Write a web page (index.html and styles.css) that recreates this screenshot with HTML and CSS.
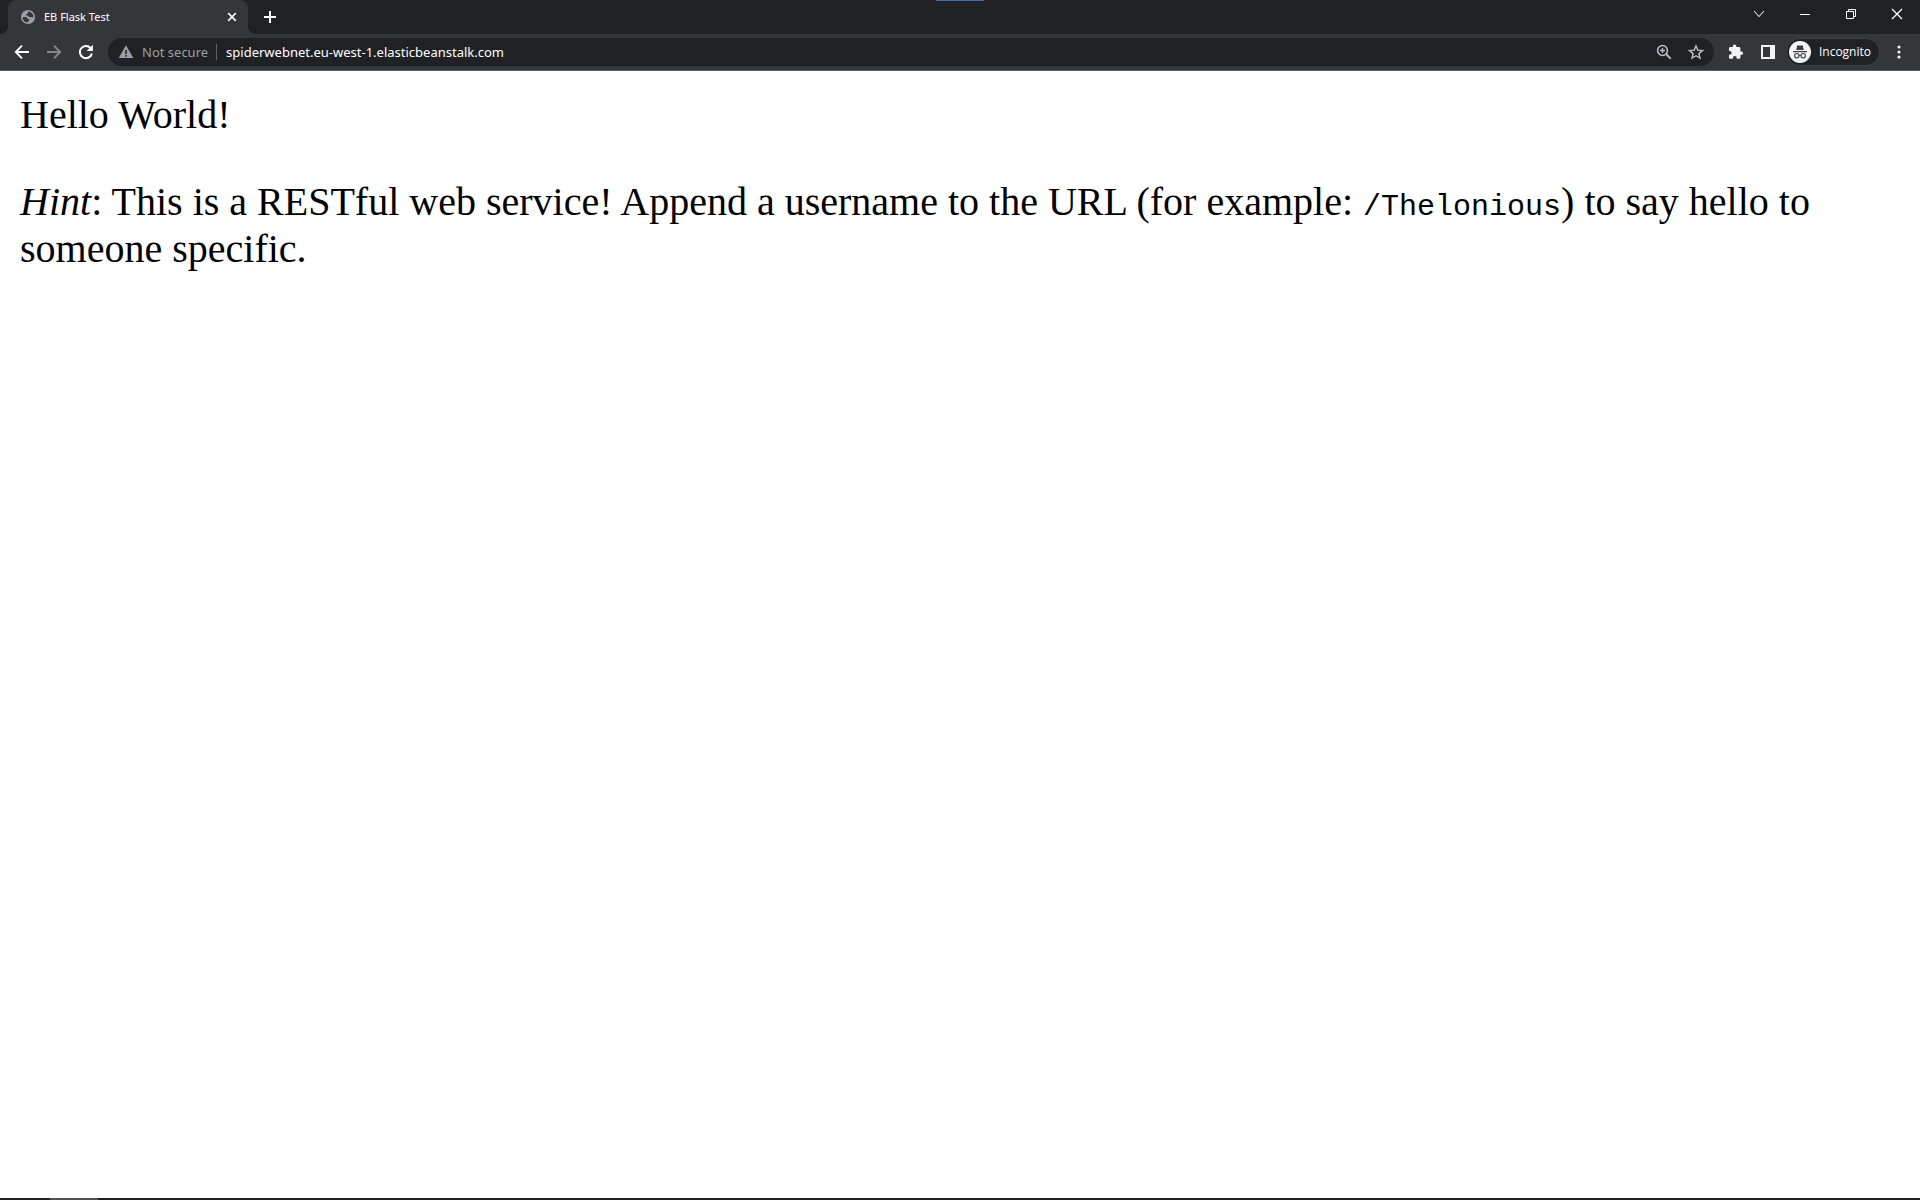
FILE: index.html
```
<!DOCTYPE html>
<html lang="en">
<head>
<meta charset="utf-8">
<title>EB Flask Test</title>
<link rel="stylesheet" href="styles.css">
</head>
<body>
<header class="browser">
  <div class="tab-strip">
    <div class="tab">
      <svg class="favicon" width="16" height="16" viewBox="0 0 16 16" aria-hidden="true"><circle cx="8" cy="8" r="7" fill="#9aa0a6"/><path d="M2.600 8.300c1.500-.2 2.600-.6 3.700 0 1.200.7 1 1.500 2.100 1.600 1.200.1 1.300 1 .6 1.700-.8.700-.6 1.600-1.600 2A5.700 5.700 0 0 1 2.600 8.300zM8.600 2.400c-1.300.7-.2 1.600-1.100 2.300-.8.600-1.500.4-1.400 1.400.1 1.200 1.900.4 2.700 1.300.8.900 1.500.9 2.300.7 1-.2 1.600.3 2.400.3A5.700 5.700 0 0 0 8.600 2.400z" fill="#35363a"/></svg>
      <span class="tab-title">EB Flask Test</span>
      <button class="tab-close" aria-label="Close tab"><svg width="16" height="16" viewBox="0 0 16 16"><path d="M4.200 4.200l7.600 7.600M11.800 4.200l-7.600 7.600" stroke="#f1f3f4" stroke-width="1.700"/></svg></button>
    </div>
    <button class="new-tab" aria-label="New tab"><svg width="16" height="16" viewBox="0 0 16 16"><path d="M8 2v12M2 8h12" stroke="#fff" stroke-width="2"/></svg></button>
    <div class="screen-handle"></div>
    <div class="window-controls">
      <button class="window-button" aria-label="Search tabs"><svg width="16" height="16" viewBox="0 0 16 16"><path d="M3 5l5 5.500L13 5" fill="none" stroke="#dadce0" stroke-width="1.100"/></svg></button>
      <button class="window-button" aria-label="Minimize"><svg width="16" height="16" viewBox="0 0 16 16"><path d="M3 8.500h10" stroke="#fff"/></svg></button>
      <button class="window-button" aria-label="Restore"><svg width="16" height="16" viewBox="0 0 16 16"><path d="M3.500 5.500h7v7h-7zM5.500 5.500v-2h7v7h-2" fill="none" stroke="#fff"/></svg></button>
      <button class="window-button" aria-label="Close"><svg width="16" height="16" viewBox="0 0 16 16"><path d="M3 3l10 10M13 3L3 13" stroke="#fff" stroke-width="1.300"/></svg></button>
    </div>
  </div>
  <div class="toolbar">
    <div class="nav">
      <button class="tool" aria-label="Back"><svg width="16" height="16" viewBox="0 0 16 16"><path d="M15 8H2.500M8 1.700L1.800 8 8 14.300" fill="none" stroke="#fff" stroke-width="1.900"/></svg></button>
      <button class="tool" aria-label="Forward"><svg width="16" height="16" viewBox="0 0 16 16"><path d="M1 8h12.500M8 1.700L14.200 8 8 14.300" fill="none" stroke="#85878b" stroke-width="1.900"/></svg></button>
      <button class="tool" aria-label="Reload"><svg width="16" height="16" viewBox="0 0 16 16"><path d="M13.900 9.500A6.100 6.100 0 1 1 12.300 3.700" fill="none" stroke="#fff" stroke-width="2"/><path d="M14.900 .8v6.300H8.600z" fill="#fff"/></svg></button>
    </div>
    <div class="omnibox">
      <svg width="16" height="16" viewBox="0 0 16 16" aria-hidden="true"><path d="M8 1.200L15.300 14H.7z" fill="#9aa0a6"/><path d="M8 6v4M8 11v1.800" stroke="#202124" stroke-width="1.600"/></svg>
      <span class="security">Not secure</span>
      <input class="address" type="text" aria-label="Address" value="spiderwebnet.eu-west-1.elasticbeanstalk.com">
      <button class="tool" aria-label="Zoom"><svg width="16" height="16" viewBox="0 0 16 16"><circle cx="6.500" cy="6.500" r="4.900" fill="none" stroke="#bdc1c6" stroke-width="1.500"/><path d="M10.200 10.200l4.500 4.500" stroke="#bdc1c6" stroke-width="1.900"/><path d="M6.500 4v5M4 6.500h5" stroke="#bdc1c6" stroke-width="1.300"/></svg></button>
      <button class="tool" aria-label="Bookmark this tab"><svg width="16" height="16" viewBox="0 0 16 16"><path d="M8 1.900l1.800 4.300 4.600.4-3.500 3 1.100 4.500L8 11.700l-4 2.400 1.100-4.500-3.500-3 4.600-.4z" fill="none" stroke="#bdc1c6" stroke-width="1.400"/></svg></button>
    </div>
    <div class="extras">
      <button class="tool" aria-label="Extensions"><svg width="16" height="16" viewBox="0 0 16 16"><path d="M13.300 7.400h-.9V4.500c0-.8-.6-1.400-1.400-1.400H8.400v-.8a1.800 1.800 0 0 0-3.600 0v.8H2.300C1.500 3.100 1 3.700 1 4.500v2.400h.8a1.900 1.900 0 0 1 0 3.800H1v2.700c0 .8.600 1.400 1.400 1.400h2.500V14a1.900 1.900 0 0 1 3.800 0v.8H11c.8 0 1.400-.6 1.400-1.400V11h.9a1.800 1.800 0 0 0 0-3.600z" fill="#f1f3f4"/></svg></button>
      <button class="tool" aria-label="Side panel"><svg width="16" height="16" viewBox="0 0 16 16"><path d="M1 1h14v14H1zM3 3v10h7V3z" fill="#f1f3f4" fill-rule="evenodd"/></svg></button>
      <button class="profile"><svg width="22" height="22" viewBox="0 0 22 22" aria-hidden="true"><circle cx="11" cy="11" r="11" fill="#f1f3f4"/><path d="M7.200 9l1-4.200q.3-.8 1.100-.5l1.700.5 1.700-.5q.8-.3 1.100.5l1 4.200zM4 10h14v1.200H4z" fill="#3c4043"/><circle cx="7.800" cy="14.700" r="2.200" fill="none" stroke="#3c4043" stroke-width="1.100"/><circle cx="14.200" cy="14.700" r="2.200" fill="none" stroke="#3c4043" stroke-width="1.100"/><path d="M10 14.500q1-.7 2 0" fill="none" stroke="#3c4043"/></svg><span>Incognito</span></button>
      <button class="tool" aria-label="Menu"><svg width="16" height="16" viewBox="0 0 16 16" fill="#f1f3f4"><circle cx="8" cy="3" r="1.600"/><circle cx="8" cy="8" r="1.600"/><circle cx="8" cy="13" r="1.600"/></svg></button>
    </div>
  </div>
</header>
<main class="page">
  <p>Hello World!</p>
  <p><em>Hint</em>: This is a RESTful web service! Append a username to the URL (for example: <code>/Thelonious</code>) to say hello to someone specific.</p>
</main>
<footer class="taskbar"><div class="taskbar-item"></div></footer>
</body>
</html>
```
FILE: styles.css
```
* {
  box-sizing: border-box;
}

body {
  margin: 0;
  min-height: 100vh;
  display: flex;
  flex-direction: column;
  background: #fff;
  color: #000;
}

button {
  display: flex;
  align-items: center;
  justify-content: center;
  padding: 0;
  border: 0;
  background: none;
  font: inherit;
  color: inherit;
}

svg {
  display: block;
  flex: none;
}

.browser {
  position: relative;
  font: 13px/20px "Noto Sans", "Open Sans", sans-serif;
  color: #fff;
}

.tab-strip {
  display: flex;
  height: 34px;
  padding-left: 8px;
  background: #202124;
}

.tab {
  position: relative;
  display: flex;
  align-items: center;
  width: 240px;
  padding: 0 8px 0 12px;
  border-radius: 8px 8px 0 0;
  background: #35363a;
}

.tab::before,
.tab::after {
  content: "";
  position: absolute;
  bottom: 0;
  width: 8px;
  height: 8px;
}

.tab::before {
  right: 100%;
  background: radial-gradient(circle at 0 0, transparent 8px, #35363a 8px);
}

.tab::after {
  left: 100%;
  background: radial-gradient(circle at 100% 0, transparent 8px, #35363a 8px);
}

.tab-title {
  flex: 1;
  margin-left: 8px;
  font-size: 11px;
}

.new-tab {
  width: 28px;
  margin-left: 8px;
}

.screen-handle {
  position: absolute;
  top: 0;
  left: 50%;
  width: 48px;
  height: 1px;
  margin-left: -24px;
  background: #3d6cae;
}

.window-controls {
  display: flex;
  margin-left: auto;
}

.window-button {
  width: 46px;
  height: 28px;
}

.toolbar {
  display: flex;
  align-items: center;
  gap: 6px;
  height: 37px;
  padding: 0 5px 0 6px;
  border-bottom: 1px solid #5c5d61;
  background: #35363a;
}

.nav,
.extras {
  display: flex;
  align-items: center;
}

.tool {
  width: 32px;
  height: 28px;
}

.omnibox {
  flex: 1;
  display: flex;
  align-items: center;
  height: 28px;
  padding: 0 2px 0 10px;
  border-radius: 14px;
  background: #202124;
}

.security {
  margin-left: 8px;
  padding-right: 8px;
  border-right: 1px solid #5f6368;
  line-height: 16px;
  color: #9aa0a6;
}

.address {
  flex: 1;
  padding: 0 0 0 9px;
  border: 0;
  background: none;
  font: inherit;
  color: #fff;
}

.profile {
  gap: 8px;
  height: 28px;
  margin: 0 3px 0 2px;
  padding: 0 8px 0 2px;
  border: 1px solid #3c4043;
  border-radius: 14px;
  background: #202124;
  font-family: "Open Sans", "Noto Sans", sans-serif;
  font-size: 12px;
}

.page {
  flex: 1;
  padding: 20px;
  font: 40px/47px "Liberation Serif", "Times New Roman", serif;
}

.page p {
  margin: 0 0 40px;
}

.page code {
  font: 30px/1 "Liberation Mono", Consolas, monospace;
}

.taskbar {
  height: 2px;
  padding-left: 50px;
  background: #202124;
}

.taskbar-item {
  width: 48px;
  height: 2px;
  background: #505154;
}
```
